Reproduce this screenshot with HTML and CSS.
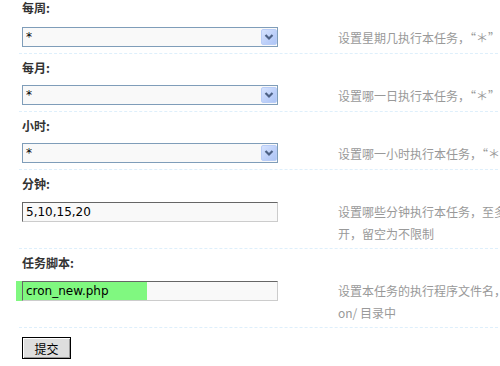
FILE: index.html
```html
<!DOCTYPE html>
<html lang="zh-CN">
<head>
    <meta charset="UTF-8">
    <title>计划任务设置</title>
    <link rel="stylesheet" href="styles.css">
</head>
<body>
    <div class="form">
        <div class="item">
            <div class="label">每周:</div>
            <div class="row">
                <div class="field">
                    <span class="select-wrap">
                        <select><option>*</option></select>
                        <span class="arrow"><svg viewBox="0 0 16 16" width="16" height="16"><path d="M4.5 6 L8 9.5 L11.5 6" fill="none" stroke="#4d6185" stroke-width="2.2"/></svg></span>
                    </span>
                </div>
                <div class="tip">设置星期几执行本任务，<span class="q">“*”</span>为不限制</div>
            </div>
        </div>

        <div class="item">
            <div class="label">每月:</div>
            <div class="row">
                <div class="field">
                    <span class="select-wrap">
                        <select><option>*</option></select>
                        <span class="arrow"><svg viewBox="0 0 16 16" width="16" height="16"><path d="M4.5 6 L8 9.5 L11.5 6" fill="none" stroke="#4d6185" stroke-width="2.2"/></svg></span>
                    </span>
                </div>
                <div class="tip">设置哪一日执行本任务，<span class="q">“*”</span>为不限制</div>
            </div>
        </div>

        <div class="item">
            <div class="label">小时:</div>
            <div class="row">
                <div class="field">
                    <span class="select-wrap">
                        <select><option>*</option></select>
                        <span class="arrow"><svg viewBox="0 0 16 16" width="16" height="16"><path d="M4.5 6 L8 9.5 L11.5 6" fill="none" stroke="#4d6185" stroke-width="2.2"/></svg></span>
                    </span>
                </div>
                <div class="tip">设置哪一小时执行本任务，<span class="q">“*”</span>为不限制</div>
            </div>
        </div>

        <div class="item">
            <div class="label">分钟:</div>
            <div class="row">
                <div class="field">
                    <span class="input-wrap"><input class="txt" type="text" value="5,10,15,20"></span>
                </div>
                <div class="tip">设置哪些分钟执行本任务，至多可以设置 12 个分钟值，多个值之间用半角逗号 "," 隔<br>开，留空为不限制</div>
            </div>
        </div>

        <div class="item">
            <div class="label">任务脚本:</div>
            <div class="row">
                <div class="field">
                    <span class="input-wrap">
                        <span class="mark"></span>
                        <input class="txt" type="text" value="cron_new.php">
                    </span>
                </div>
                <div class="tip">设置本任务的执行程序文件名，请勿包含路径，程序脚本统一存放于 ./source/include/cr<br>on/ 目录中</div>
            </div>
        </div>

        <div class="submit">
            <button type="button" class="btn">提交</button>
        </div>
    </div>
</body>
</html>
```

FILE: styles.css
```css
* {
    margin: 0;
    padding: 0;
    box-sizing: border-box;
}

html, body {
    overflow: hidden;
}

body {
    font-family: "Noto Sans CJK SC", "DejaVu Sans", sans-serif;
    font-size: 12px;
    color: #333;
    background: #fff;
}

.form {
    width: 980px;
    margin-left: 19px;
}

.item {
    padding: 6px 0 3px 3px;
    border-bottom: 1px dashed #deeffb;
}

.item:first-child {
    padding-top: 0;
}

.label {
    font-weight: bold;
    line-height: 16px;
    margin-bottom: 9px;
}

.item:first-child .label {
    margin-bottom: 11px;
}

.row {
    display: flex;
    align-items: flex-start;
}

.field {
    flex: none;
    width: 313px;
}

.tip {
    padding-left: 3px;
    color: #999;
    line-height: 22px;
    white-space: nowrap;
}

/* full-width quotes, as the original font draws them */
.tip .q {
    font-feature-settings: "fwid" 1;
}

/* select */
.select-wrap {
    position: relative;
    display: block;
    width: 256px;
    height: 20px;
    margin-bottom: 3px;
}

.select-wrap select {
    -webkit-appearance: none;
    appearance: none;
    display: block;
    width: 256px;
    height: 20px;
    border: 1px solid #7f9db9;
    background: #f9f9f9;
    padding-left: 3px;
    font-family: "DejaVu Sans", sans-serif;
    font-size: 12px;
    color: #000;
    outline: none;
}

.arrow {
    position: absolute;
    top: 2px;
    right: 1px;
    width: 16px;
    height: 16px;
    border: 1px solid #b9cdf7;
    border-radius: 2px;
    background: linear-gradient(135deg, #d6e3fe 0%, #bccff9 60%, #aec5f5 100%);
    pointer-events: none;
}

.arrow svg {
    display: block;
    margin: -1px 0 0 -1px;
}

/* text input */
.input-wrap {
    position: relative;
    display: block;
    width: 256px;
    height: 20px;
    margin: 1px 0 3px;
    background: #f9f9f9;
}

.txt {
    position: relative;
    display: block;
    width: 256px;
    height: 20px;
    border: 1px solid;
    border-color: #666 #ccc #ccc #666;
    background: transparent;
    padding-left: 3px;
    font-family: "DejaVu Sans", sans-serif;
    font-size: 12px;
    color: #000;
    outline: none;
}

.mark {
    position: absolute;
    top: 0;
    left: -6px;
    width: 131px;
    height: 20px;
    background: #80f880;
}

.submit {
    padding: 9px 0 0 3px;
}

.btn {
    width: 49px;
    height: 22px;
    border: 1px solid #000;
    background: #dedede;
    box-shadow: inset 1px 1px 0 #fff, inset -1px -1px 0 #999;
    font-family: "Noto Sans CJK SC", sans-serif;
    font-size: 12px;
    color: #000;
}
```
